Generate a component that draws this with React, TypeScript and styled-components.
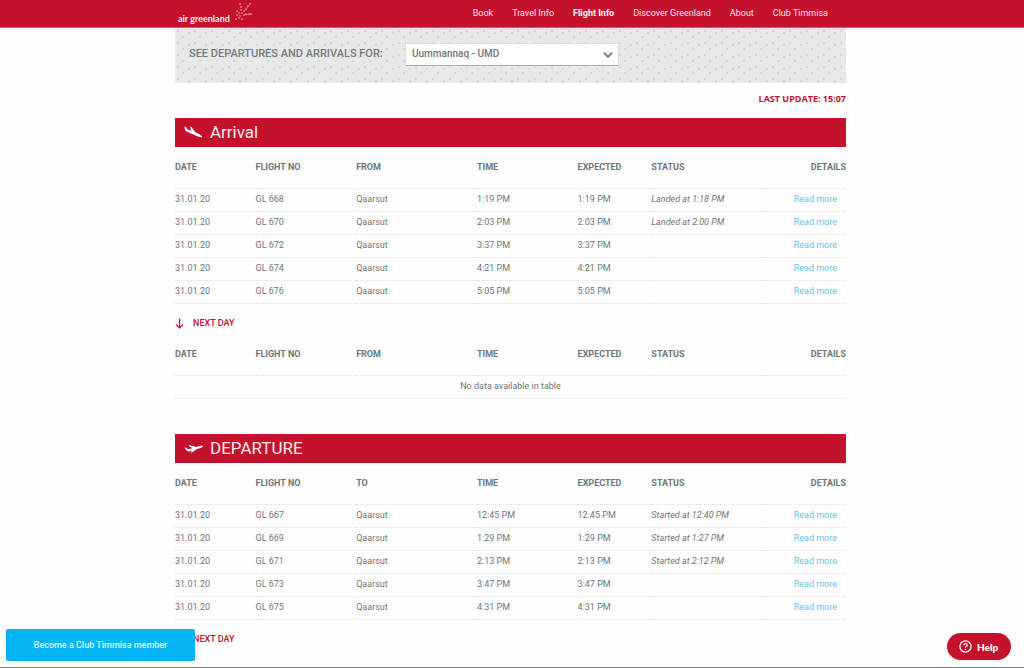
import React from "react";
import styled, { createGlobalStyle } from "styled-components";

const red = "#c4122d";
const gray = "#6f7678";

const GlobalStyle = createGlobalStyle`
  * { box-sizing: border-box; }
  body {
    margin: 0;
    background: #fefefe;
    color: ${gray};
    font-family: Roboto, "Liberation Sans", sans-serif;
    font-size: 9px;
    line-height: 12px;
  }
`;

const Page = styled.div`
  min-height: 100vh;
  padding-right: 3px;
  border-bottom: 1px solid #808080;
`;

const Header = styled.header`
  background: ${red};
  margin-right: -3px;
  padding-right: 3px;
  border-bottom: 1px solid #d4606f;
`;

const Container = styled.div`
  width: calc(100% - 32px);
  max-width: 671px;
  margin: 0 auto;
`;

const HeaderInner = styled(Container)`
  display: flex;
  justify-content: space-between;
  height: 27px;
  padding: 0 18px 0 3px;
`;

const Logo = styled.a`
  display: flex;
  align-items: flex-end;
  gap: 5px;
  padding-bottom: 2px;
  color: #fbe9ec;
  font-family: Lato, sans-serif;
  font-size: 9px;
  font-weight: 700;
  line-height: 12px;
  text-decoration: none;
  svg { align-self: flex-start; margin-top: 2px; }
`;

const Nav = styled.nav`
  display: flex;
  align-items: center;
  gap: 19px;
  padding-bottom: 2px;
`;

const NavLink = styled.a<{ $active?: boolean }>`
  color: ${(p) => (p.$active ? "#fff" : "#fbe4e7")};
  font-weight: ${(p) => (p.$active ? 700 : 400)};
  text-decoration: none;
`;

const FilterPanel = styled.section`
  display: flex;
  align-items: flex-start;
  height: 55px;
  padding: 15px 14px 0;
  background-color: #e7e9e9;
  background-image:
    radial-gradient(circle at 3px 3px, #e8d0d0 1px, transparent 1px),
    radial-gradient(circle at 8px 9px, #e8d0d0 1px, transparent 1px),
    radial-gradient(circle at 14px 5px, #e8d0d0 1px, transparent 1px);
  background-size: 17px 12px;
`;

const FilterLabel = styled.label`
  width: 216px;
  padding-top: 5px;
  font-size: 11px;
  font-weight: 500;
  color: #757d80;
`;

const SelectWrap = styled.div`
  position: relative;
  width: 214px;
  svg { position: absolute; right: 6px; top: 8px; pointer-events: none; }
`;

const Select = styled.select`
  appearance: none;
  width: 100%;
  height: 23px;
  padding: 0 6px 2px;
  border: 1px solid #dcdede;
  border-bottom-color: #a9adae;
  border-radius: 0;
  background: #fff;
  color: ${gray};
  font: 500 10px/18px Roboto, sans-serif;
`;

const Updated = styled.p`
  margin: 0;
  padding: 10px 0 13px;
  text-align: right;
  font-family: "Open Sans", sans-serif;
  font-weight: 700;
  color: ${red};
`;

const Board = styled.section`
  & + & { margin-top: 35px; }
`;

const Banner = styled.h2`
  display: flex;
  align-items: center;
  gap: 7px;
  height: 29px;
  margin: 0;
  padding: 0 9px 2px;
  background: ${red};
  color: #fbe9ec;
  font-size: 17px;
  font-weight: 400;
  line-height: 20px;
`;

const Table = styled.table`
  width: 100%;
  table-layout: fixed;
  border-collapse: separate;
  border-spacing: 0;
`;

const Th = styled.th<{ $width: number }>`
  width: ${(p) => p.$width}%;
  height: 42px;
  padding: 0 0 2px;
  border-bottom: 1px dotted #dfdfdf;
  text-align: left;
  font-weight: 700;
  &:last-child { text-align: right; }
`;

const Td = styled.td`
  height: 23px;
  padding: 0 0 2px;
  border-bottom: 1px dotted #dfdfdf;
  white-space: nowrap;
`;

const Status = styled(Td)`
  font-style: italic;
`;

const Details = styled(Td)`
  padding-right: 9px;
  text-align: right;
`;

const Empty = styled(Td)`
  text-align: center;
`;

const ReadMore = styled.a`
  color: #6cc0ea;
  text-decoration: none;
`;

const NextDay = styled.button`
  display: flex;
  align-items: center;
  gap: 9px;
  height: 30px;
  padding: 8px 0 0;
  border: 0;
  background: none;
  color: ${red};
  font: 500 9px/12px Roboto, sans-serif;
`;

const JoinButton = styled.button`
  position: fixed;
  left: 6px;
  bottom: 7px;
  width: 189px;
  height: 32px;
  border: 0;
  border-radius: 2px;
  background: #04b5f3;
  color: #e4f6fd;
  font: 500 9px/12px Roboto, sans-serif;
`;

const HelpButton = styled.button`
  position: fixed;
  right: 13px;
  bottom: 8px;
  display: flex;
  align-items: center;
  gap: 5px;
  height: 27px;
  width: 64px;
  padding: 0 0 0 12px;
  border: 0;
  border-radius: 14px;
  background: ${red};
  color: #fff;
  font: 900 10px/14px Lato, sans-serif;
`;

type Flight = [no: string, time: string, status?: string];

const arrivals: Flight[] = [
  ["GL 668", "1:19 PM", "Landed at 1:18 PM"],
  ["GL 670", "2:03 PM", "Landed at 2:00 PM"],
  ["GL 672", "3:37 PM"],
  ["GL 674", "4:21 PM"],
  ["GL 676", "5:05 PM"],
];

const departures: Flight[] = [
  ["GL 667", "12:45 PM", "Started at 12:40 PM"],
  ["GL 669", "1:29 PM", "Started at 1:27 PM"],
  ["GL 671", "2:13 PM", "Started at 2:12 PM"],
  ["GL 673", "3:47 PM"],
  ["GL 675", "4:31 PM"],
];

const widths = [12, 15, 18, 15, 11, 17, 12];

function FlightTable({ place, flights }: { place: string; flights: Flight[] }) {
  const heads = ["DATE", "FLIGHT NO", place, "TIME", "EXPECTED", "STATUS", "DETAILS"];
  return (
    <Table>
      <thead>
        <tr>
          {heads.map((h, i) => <Th key={h} $width={widths[i]}>{h}</Th>)}
        </tr>
      </thead>
      <tbody>
        {flights.map(([no, time, status]) => (
          <tr key={no}>
            <Td>31.01.20</Td>
            <Td>{no}</Td>
            <Td>Qaarsut</Td>
            <Td>{time}</Td>
            <Td>{time}</Td>
            <Status>{status}</Status>
            <Details><ReadMore href="#details">Read more</ReadMore></Details>
          </tr>
        ))}
        {flights.length === 0 && (
          <tr><Empty colSpan={7}>No data available in table</Empty></tr>
        )}
      </tbody>
    </Table>
  );
}

function NextDayButton() {
  return (
    <NextDay type="button">
      <svg width="9" height="11" viewBox="0 0 9 11" fill="none" stroke={red} strokeWidth="1.2">
        <path d="M4.5 0.5V10M1 6.5L4.5 10L8 6.5" />
      </svg>
      NEXT DAY
    </NextDay>
  );
}

const rays = [
  [2, 9], [4, 11], [2, 13], [5, 14], [1, 17], [4, 16], [7, 17],
  [5, 2], [6, 5], [6, 8], [7, 11],
  [15, 2], [13, 4], [11, 7], [9, 9],
  [9, 13], [11, 12], [14, 12], [16, 12],
];

export default function App() {
  return (
    <>
      <GlobalStyle />
      <Page>
        <Header>
          <HeaderInner>
            <Logo href="#home">
              air greenland
              <svg width="18" height="19" fill="#f3b9c1">
                {rays.map(([x, y]) => <circle key={`${x}-${y}`} cx={x} cy={y} r="0.8" />)}
                <path d="M9 9L15 2.5M9 13L16.5 12" stroke="#e58c99" strokeWidth="0.6" />
              </svg>
            </Logo>
            <Nav>
              <NavLink href="#book">Book</NavLink>
              <NavLink href="#travel">Travel Info</NavLink>
              <NavLink href="#flight" $active>Flight Info</NavLink>
              <NavLink href="#discover">Discover Greenland</NavLink>
              <NavLink href="#about">About</NavLink>
              <NavLink href="#club">Club Timmisa</NavLink>
            </Nav>
          </HeaderInner>
        </Header>
        <Container as="main">
          <FilterPanel>
            <FilterLabel htmlFor="airport">SEE DEPARTURES AND ARRIVALS FOR:</FilterLabel>
            <SelectWrap>
              <Select id="airport">
                <option>Uummannaq - UMD</option>
              </Select>
              <svg width="10" height="8" viewBox="0 0 10 8" fill="none" stroke={gray} strokeWidth="1.8">
                <path d="M1 1.8L5 5.8L9 1.8" />
              </svg>
            </SelectWrap>
          </FilterPanel>
          <Updated>LAST UPDATE: 15:07</Updated>
          <Board>
            <Banner>
              <svg width="19" height="12" viewBox="0 0 19 12" fill="#fff">
                <path d="M0.5 0.5L1.8 0.7L3.2 3.2L7.4 4.8L6 0.5L7.4 0.9L11.4 6.2L15.5 8.2Q18 9.6 18.3 11Q17 11.6 14.5 10.8L3 5.8Q1 5 0.9 3.6Z" />
              </svg>
              Arrival
            </Banner>
            <FlightTable place="FROM" flights={arrivals} />
            <NextDayButton />
            <FlightTable place="FROM" flights={[]} />
          </Board>
          <Board>
            <Banner>
              <svg width="19" height="12" viewBox="0 0 19 12" fill="#fff">
                <path d="M0.5 5.8L1.8 5.6L4.2 7.2L8.2 6.2L4.4 3.6L6 3.2L12.5 5L16.5 3.8Q19 3.4 19 4.4Q18.4 5.4 16.5 6L12 7.4L8 10.6L6.6 10.8L8.2 8.6L5 9.4Q3.4 9.6 2.6 8.6Z" />
              </svg>
              DEPARTURE
            </Banner>
            <FlightTable place="TO" flights={departures} />
            <NextDayButton />
          </Board>
        </Container>
        <JoinButton type="button">Become a Club Timmisa member</JoinButton>
        <HelpButton type="button">
          <svg width="13" height="13" viewBox="0 0 13 13" fill="none" stroke="#fff" strokeWidth="1.2">
            <circle cx="6.5" cy="6.5" r="5.6" />
            <path d="M4.8 5.2Q4.9 3.6 6.5 3.6Q8.2 3.7 8.2 5.1Q8.1 6 7.2 6.4Q6.5 6.8 6.5 7.7M6.5 8.8V10" />
          </svg>
          Help
        </HelpButton>
      </Page>
    </>
  );
}
